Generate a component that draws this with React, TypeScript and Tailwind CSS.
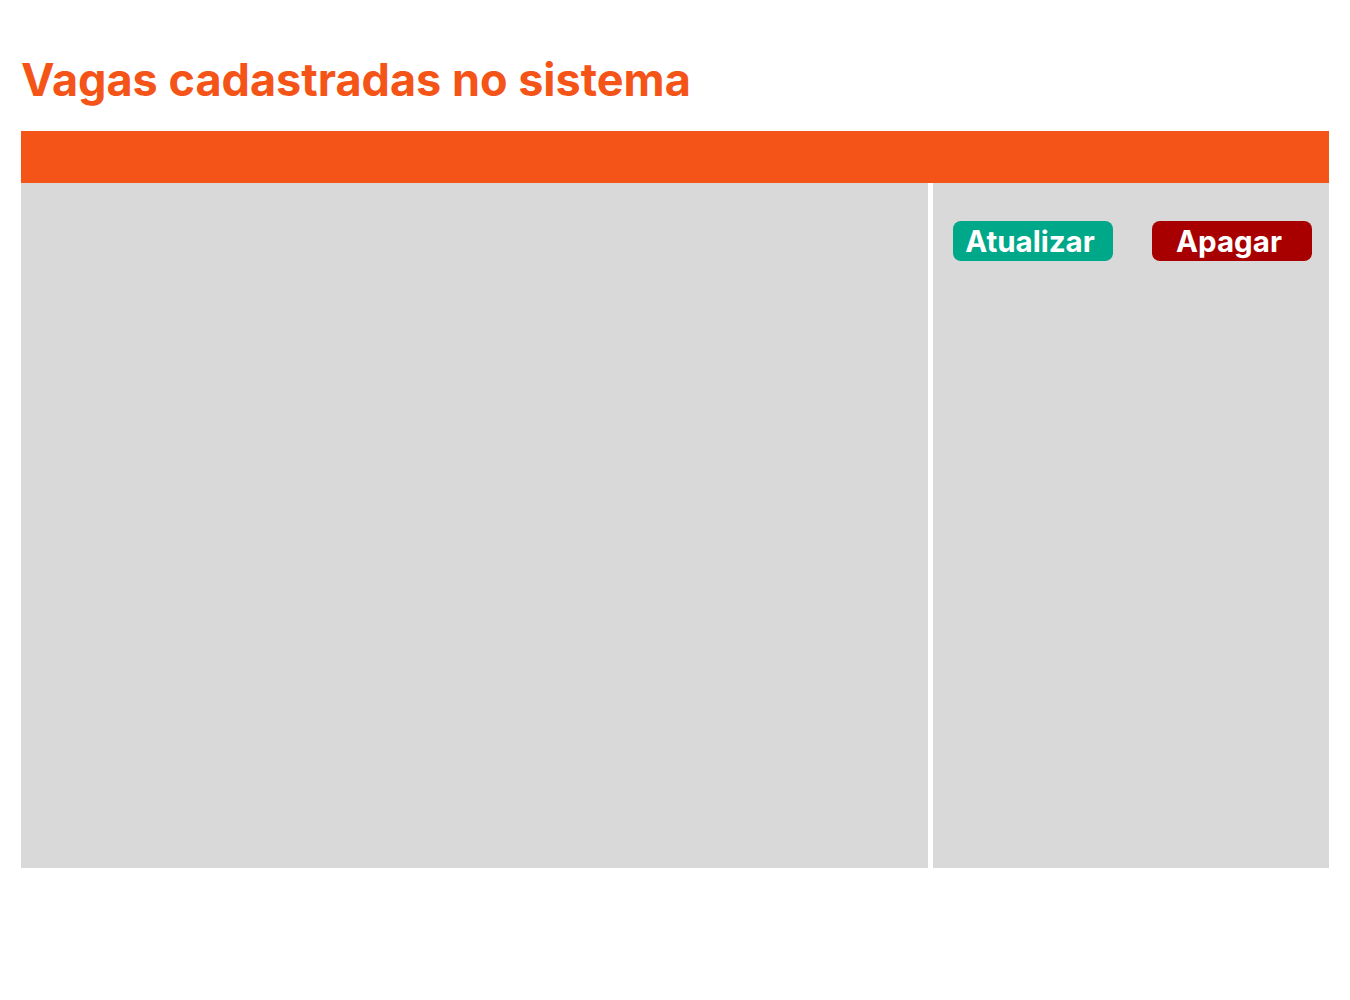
export default function App() {
  return (
    <div className="min-h-screen bg-white px-[21px] pt-[52px] font-['Inter',sans-serif]">
      {/* Title */}
      <h1 className="text-[45px] font-bold leading-[56px] text-[#F45417]">
        Vagas cadastradas no sistema
      </h1>

      <div className="mt-[23px] w-[1308px]">
        {/* Header bar */}
        <div className="h-[52px] bg-[#F45417]" />

        {/* Body */}
        <div className="flex h-[685px] gap-[5px]">
          <div className="w-[907px] bg-[#D9D9D9]" />
          <div className="flex flex-1 items-start gap-[39px] bg-[#D9D9D9] pl-[20px] pt-[38px]">
            <button className="flex h-[40px] w-[160px] items-center justify-center rounded-[8px] bg-[#00A88A] pr-[6px] text-[29.5px] font-bold text-white">
              Atualizar
            </button>
            <button className="flex h-[40px] w-[160px] items-center justify-center rounded-[8px] bg-[#A80000] pr-[6px] text-[29.5px] font-bold text-white">
              Apagar
            </button>
          </div>
        </div>
      </div>
    </div>
  );
}
